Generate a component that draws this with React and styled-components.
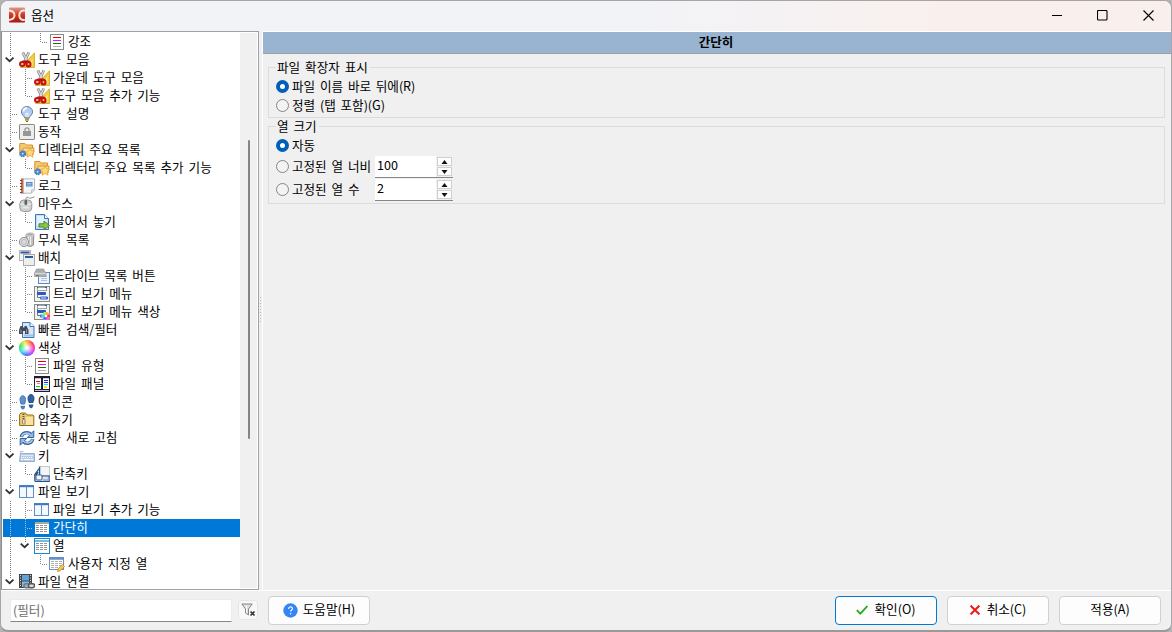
import React, { useState } from 'react'
import styled, { createGlobalStyle, css } from 'styled-components'

const svgProps = { width: 16, height: 16, viewBox: '0 0 16 16', fill: 'none' }

const LinesIcon = () => (
  <svg {...svgProps}>
    <rect x="1.5" y=".5" width="13" height="15" fill="#fff" stroke="#888a85" />
    <path d="M4 3.5h8" stroke="#e00000" />
    <path d="M4 6.5h8" stroke="#ff00ff" />
    <path d="M4 9.5h8" stroke="#008000" />
    <path d="M4 12.5h8" stroke="#b0b0b0" />
  </svg>
)

const ScissorsIcon = () => (
  <svg {...svgProps}>
    <path d="M15.5 .8v14.7H1.500z" fill="#f2cc3e" stroke="#d0a61c" strokeWidth=".8" />
    <path d="M13.500 6.500V13.500H9z" fill="#fbe88c" />
    <path d="M3.800 .5 8 9M9.800 .5 5.800 9" stroke="#858585" strokeWidth="2.800" />
    <path d="M3.800 .8 8 8.500M9.800 .8 5.800 8.500" stroke="#dcdcdc" strokeWidth="1.300" />
    <path d="M3.500 8.500h6.500l1.500 2-4.500 1-4.500-.8z" fill="#b80f0f" />
    <ellipse cx="3.300" cy="12" rx="2.300" ry="2" stroke="#c41212" strokeWidth="2" fill="#e8c9b8" />
    <ellipse cx="9.500" cy="12.200" rx="2" ry="2.200" stroke="#c41212" strokeWidth="2.100" fill="#f0c060" />
  </svg>
)

const BulbIcon = () => (
  <svg {...svgProps}>
    <path d="M8 .6a5.400 5.400 0 0 0-5.600 5.300c0 3 3 4 3.200 6h4.800c.2-2 3.200-3 3.200-6A5.400 5.400 0 0 0 8 .6z" fill="#b4cdef" stroke="#6580ad" />
    <path d="M4.5 5.5A3.5 3.5 0 0 1 8 2.2" stroke="#fff" strokeWidth="1.8" />
    <path d="M7 11V7l1 1 1-1v4" stroke="#f4f8ff" />
    <path d="M6 12.500h4M6 14h4" stroke="#b49b3c" strokeWidth="1.400" />
    <path d="M7 15.500h2" stroke="#666" />
  </svg>
)

const LockIcon = () => (
  <svg {...svgProps}>
    <rect x=".5" y=".5" width="15" height="15" rx=".6" fill="#ededeb" stroke="#888a85" />
    <path d="M6 8V5.800a2 2 0 0 1 4 0V8" stroke="#969696" strokeWidth="1.300" />
    <rect x="4" y="7" width="8" height="5" fill="#969696" />
  </svg>
)

const FolderStarIcon = () => (
  <svg {...svgProps}>
    <path d="M.8 12V1.500h5l1.500 1.500h6.200V6" fill="#f5c873" stroke="#d9902b" />
    <path d="M1.500 13 4.500 6H15l-1 7z" fill="#fbdc98" stroke="#e0942a" />
    <path d="m11 5.800 1.500 3 3.300.5-2.500 2.300.7 3.600-3-1.700-3 1.700.7-3.600-2.500-2.300 3.300-.5z" fill="#ffda7c" stroke="#eba12c" strokeWidth=".8" />
    <circle cx="3.700" cy="11.800" r="2.500" stroke="#3d7cc0" strokeWidth="2" strokeDasharray="1.500 .5" fill="#5c97d6" />
    <circle cx="3.700" cy="11.800" r=".8" fill="#e8f1fb" />
  </svg>
)

const LogIcon = () => (
  <svg {...svgProps}>
    <path d="M3.500.8h12v11l-3 3.400h-9z" fill="#f4f6f9" stroke="#b3bac2" />
    <path d="M12.500 15v-3.200h3" fill="#dcdcdc" stroke="#b3bac2" strokeWidth=".8" />
    <rect x="2" y=".5" width="2.500" height="15" fill="#c46a48" />
    <path d="M1 2.500h2m-2 3h2m-2 3h2m-2 3h2m-2 3h2" stroke="#6f4434" />
    <rect x="7" y="4" width="6.500" height="4.500" fill="#5488ca" />
    <path d="M8 5.500h4.500M8 7h4.500" stroke="#c5d9f0" strokeWidth=".7" />
  </svg>
)

const MouseIcon = () => (
  <svg {...svgProps}>
    <path d="M7 5.500V2.200c0-1 1.500-1.500 2.500-.5s2.500.5 6-.9" stroke="#8a8a8a" />
    <rect x=".8" y="4" width="12" height="11.500" rx="3.800" fill="#cfcfcf" stroke="#9c9c9c" />
    <path d="M1.400 8.200h10.800" stroke="#f6f6f6" />
    <rect x="5.500" y="4" width="2.600" height="5" rx="1" fill="#606060" />
    <path d="M3.500 11.500h6.500" stroke="#e8e8e8" strokeWidth="2.200" />
  </svg>
)

const DragIcon = () => (
  <svg {...svgProps}>
    <path d="M1.500.5h9l4 4v11h-13z" fill="#c3dbf4" stroke="#3a77bd" />
    <path d="M3 2h7v3.500h3V9L3 12z" fill="#e5f1fc" />
    <path d="M10.500.5v4h4" fill="#fff" stroke="#3a77bd" />
    <path d="M5 9.800h5V7l5.500 4.500L10 15.700V13H5z" fill="#8cc84b" stroke="#4c8a20" />
  </svg>
)

const TrashIcon = () => (
  <svg {...svgProps}>
    <path d="M7 2.500 14.800 2l-.4 11c-1.500 1.800-5 1.800-7 0z" fill="#c2c2c2" stroke="#8c8c8c" />
    <path d="M9.500 5v8M11.500 5v8" stroke="#efefef" />
    <ellipse cx="11" cy="2.400" rx="4" ry="1.700" fill="#a8a8a8" stroke="#dcdcdc" />
    <circle cx="5" cy="10" r="4.600" fill="#dedede" stroke="#909090" />
    <circle cx="5" cy="10" r="2.500" stroke="#b4b4b4" />
  </svg>
)

const WindowsIcon = () => (
  <svg {...svgProps}>
    <rect x=".5" y=".5" width="11" height="10" fill="#f3f3f3" stroke="#b5b5b5" />
    <path d="M1.500 2.500h9" stroke="#2c5a9f" strokeWidth="2" />
    <rect x="4.500" y="4.500" width="11" height="11" fill="#eeeeec" stroke="#a9a9a9" />
    <path d="M6 7h8" stroke="#2c5a9f" strokeWidth="2" />
  </svg>
)

const DriveListIcon = () => (
  <svg {...svgProps}>
    <rect x="4.500" y="4.500" width="11" height="11" fill="#eef4fb" stroke="#5d88bf" />
    <path d="M7 8.500h6M7 10.500h6M7 12.500h6" stroke="#aac0dc" />
    <path d="M2.500 1h7l2.500 4.500v3H.5V5z" fill="#adadad" stroke="#9c9c9c" strokeWidth=".8" />
    <path d="M1 5.500h10.500" stroke="#d8d8d8" strokeWidth="1.400" />
    <path d="M2 7.500h3" stroke="#757575" />
  </svg>
)

const TreeMenuIcon = ({ wheel }) => (
  <svg {...svgProps}>
    <rect x=".5" y=".5" width="15" height="15" fill="#f2f2f0" stroke="#888a85" />
    <rect x="3.500" y="1.500" width="9" height="3" fill="#fff" stroke="#9aa4b4" />
    <path d="M3.500 5v6.500H6" stroke="#6f7480" />
    <path d="M3 1.500h1M11 1.500h2" stroke="#2c5a9f" />
    <rect x="3" y="6" width="9" height="3" rx="1" fill="#2d55ca" />
    <rect x="6" y="10.500" width="8" height="3" rx="1" fill="#3c62d0" />
    <path d="M7 12h5" stroke="#cdd7f5" />
    {wheel && (
      <>
        <circle cx="12" cy="12" r="4" fill="#fff" />
        <path d="M12 12V8a4 4 0 0 1 3.500 2z" fill="#ffa62c" />
        <path d="M12 12l3.500-2a4 4 0 0 1 0 4z" fill="#ff3b4e" />
        <path d="M12 12l3.500 2a4 4 0 0 1-3.500 2z" fill="#ff45e0" />
        <path d="M12 12v4a4 4 0 0 1-3.500-2z" fill="#5a62ff" />
        <path d="M12 12l-3.500 2a4 4 0 0 1 0-4z" fill="#2cdfe8" />
        <path d="M12 12l-3.500-2A4 4 0 0 1 12 8z" fill="#9cf03a" />
        <circle cx="12" cy="12" r="1.200" fill="#fff" />
      </>
    )}
  </svg>
)

const SearchIcon = () => (
  <svg {...svgProps}>
    <path d="M3.500.5h7.500l4 4v11H3.500z" fill="#d5e6f8" stroke="#3a77bd" />
    <path d="M11 .5v4h4" fill="#fff" stroke="#3a77bd" />
    <path d="M5 12.500h9v2H5z" fill="#9dc1e8" />
    <path d="M1.500 4h2v1.500h2V4h2L9.500 8v4H6V9H4v3H0V8z" fill="#414a55" />
    <path d="M2 7.500v3.500M7.500 7.500v3.500" stroke="#8d99a6" />
  </svg>
)

const Wheel = styled.span`
  display: block;
  width: 16px;
  height: 16px;
  border-radius: 50%;
  background: radial-gradient(circle, #fff 5%, rgba(255, 255, 255, 0) 70%),
    conic-gradient(#ff9a20, #ff3030 12%, #ff20b0 25%, #b030ff 38%, #3060ff 52%, #20d8e8 66%, #20e050 80%, #d8f020 93%, #ff9a20);
`

const PanelIcon = () => (
  <svg {...svgProps} shapeRendering="crispEdges">
    <rect x=".5" y=".5" width="15" height="15" fill="#fff" stroke="#1c1c38" />
    <path d="M0 1h16M8 2v11M0 13.500h16" stroke="#1c1c38" strokeWidth="1" />
    <path d="M7.500 2v11M8.500 2v11" stroke="#1c1c38" />
    <path d="M1 2.500h6M9 2.500h6" stroke="#c8c8d4" />
    <path d="M1 14.500h14" stroke="#c8c8d4" />
    <path d="M2 5.500h4" stroke="#f00" />
    <path d="M3 7.500h3" stroke="#d88" />
    <path d="M2 10.500h4" stroke="#0d0" />
    <path d="M10 4.500h4M10 6.500h4" stroke="#22f" />
    <path d="M10 8.500h4" stroke="#0ee" />
    <path d="M10 10.500h3" stroke="#ee0" strokeWidth="2" />
  </svg>
)

const FeetIcon = () => (
  <svg {...svgProps}>
    <path d="M1 5.500c0-5 5.500-5 5.500 0 0 2-.6 3-.9 4.500H2C1.800 8.500 1 7.500 1 5.500z" fill="#5f92cb" stroke="#4475b0" />
    <path d="M1.500 11.800h4.500c.3 5-4.500 5-4.500 0z" fill="#4d80bb" />
    <path d="M9 4.500C9-.8 15-.8 15 4.500c0 2-.8 3-1 4h-4C9.800 7.500 9 6.500 9 4.500z" fill="#31609c" stroke="#234f88" />
    <path d="M9.800 10.500h4.500c.2 5-4.700 5-4.500 0z" fill="#2f5e99" />
  </svg>
)

const ZipIcon = () => (
  <svg {...svgProps}>
    <path d="M.6 13.500V2.500L2 1h4.500L8 3h6l.8 1v9.500z" fill="#efcb6f" stroke="#9a6d14" />
    <path d="M7 5h7v8H7z" fill="#f8e3a2" />
    <path d="M4.500 2v7" stroke="#555" strokeWidth="2" strokeDasharray="1 1" />
    <rect x="3.500" y="7.500" width="2.500" height="4.500" rx="1" fill="#e2e2e2" stroke="#777" strokeWidth=".8" />
  </svg>
)

const RefreshIcon = () => (
  <svg {...svgProps}>
    <path d="M2.300 7C3 2.800 8.500 1 12 4.500" stroke="#34639f" strokeWidth="3.400" />
    <path d="M14.800.8v6.700H8.300z" fill="#8fb5e2" stroke="#34639f" />
    <path d="M13.700 9C13 13.200 7.500 15 4 11.500" stroke="#34639f" strokeWidth="3.400" />
    <path d="M1.200 15.200V8.500h6.500z" fill="#8fb5e2" stroke="#34639f" />
    <path d="M2.600 6.700C3.300 3.200 8.500 1.600 12 5M13.400 9.300C12.700 12.800 7.500 14.400 4 11" stroke="#a8c7ea" strokeWidth="1.700" />
  </svg>
)

const KeyboardIcon = () => (
  <svg {...svgProps}>
    <path d="M1.500 5.500V3.500h3" stroke="#a6bfdc" />
    <path d="M1.500 5.500h14v8H.5z" fill="#b9cfe9" stroke="#93afd2" />
    <path d="M2.500 7.500h12M2 9.500h12" stroke="#fff" strokeDasharray="1 1" />
    <path d="M2 11.500h2M5 11.500h6M12 11.500h2" stroke="#fff" />
  </svg>
)

const HotkeyIcon = () => (
  <svg {...svgProps}>
    <path d="M.8 14.500V8.500L5.500 2V1h9.700v14.500H1.500z" fill="#dbe4ef" stroke="#24508c" strokeWidth="1.200" />
    <rect x="6.500" y=".5" width="9" height="9" rx="1" fill="#f3f4f4" stroke="#c5cbd2" />
    <path d="M5.500 2v8H15" stroke="#24508c" />
    <path d="M1.500 9.500 4 6" stroke="#24508c" strokeWidth="1.600" />
    <rect x="2" y="9" width="6" height="5" rx="1" fill="#f6f6f6" stroke="#335c94" />
    <path d="M9 14h5.500v-3" stroke="#8ea9cc" strokeWidth="1.500" />
  </svg>
)

const ColumnsIcon = () => (
  <svg {...svgProps}>
    <rect x=".5" y="1.500" width="14" height="12" fill="#f5f9fe" stroke="#5c8fca" />
    <path d="M0 2.300h15" stroke="#3b78be" strokeWidth="1.800" />
    <path d="M7.500 2v12" stroke="#5c8fca" />
  </svg>
)

const GridIcon = ({ framed }) => (
  <svg {...svgProps} shapeRendering="crispEdges">
    {framed && <rect x=".5" y=".5" width="15" height="15" fill="#fff" stroke="#1787ce" />}
    <rect x="1" y="2" width="14" height="12" fill="#fff" />
    <rect x="1" y="2" width="14" height="2" fill={framed ? '#79b8e2' : '#a9a99f'} />
    <path d="M2 5.500h12M2 7.500h12M2 9.500h12M2 11.500h12" stroke="#929292" strokeDasharray="3 1" />
  </svg>
)

const GridEditIcon = () => (
  <svg {...svgProps}>
    <rect x=".5" y="1.500" width="14" height="12" fill="#fff" stroke="#6d8fbe" />
    <path d="M0 2.500h15" stroke="#668fca" strokeWidth="2.500" />
    <path d="M2 5.500h12M2 7.500h12M2 9.500h12M2 11.500h9" stroke="#b0b0b0" strokeDasharray="3 1" />
    <path d="m8.500 15.500.7-2.700 4.300-4.300 2 2-4.300 4.300z" fill="#f7ca55" stroke="#c68518" strokeWidth=".8" />
  </svg>
)

const FilmIcon = () => (
  <svg {...svgProps}>
    <rect x="0" y="0" width="13" height="14" fill="#454545" />
    <path d="M1.500 1v12M11.500 1v12" stroke="#ddd" strokeDasharray="1 1.500" />
    <rect x="3" y="1" width="7" height="5.500" fill="#5ba4de" />
    <rect x="3" y="7.500" width="7" height="5.500" fill="#82b9e2" />
    <rect x="5" y="9.700" width="6" height="4" rx="2" stroke="#777" strokeWidth="1.500" />
    <rect x="9.500" y="9.700" width="6" height="4" rx="2" stroke="#555" strokeWidth="1.500" fill="#ddd" />
  </svg>
)

const AppLogo = () => (
  <svg {...svgProps}>
    <defs>
      <linearGradient id="logo" x1="0" y1="0" x2="0" y2="1">
        <stop offset="0" stopColor="#e59684" />
        <stop offset=".5" stopColor="#cf3721" />
        <stop offset="1" stopColor="#a8180c" />
      </linearGradient>
    </defs>
    <rect y=".5" width="16" height="15" rx="1" fill="url(#logo)" />
    <path d="M0 3.500c3.500.3 5.500 2 5.500 4.700S3.500 12.500 0 12.900M15.800 3.700C12.500 2.900 10.300 5.100 10.300 8.200s2.200 5.300 5.500 4.600" stroke="#f7e7e4" strokeWidth="2" />
  </svg>
)

const Guide = ({ kind, light }) => {
  const stroke = light ? '#9cc8ee' : '#808080'
  const full = kind === 'line' || kind === 'tee'
  return (
    <svg width="15" height="18" viewBox="0 0 15 18" fill="none">
      {full && <path d="M7.500 0v18" stroke={stroke} strokeDasharray="1 1" />}
      {(kind === 'end' || kind === 'open') && <path d={kind === 'end' ? 'M7.500 0v9' : 'M7.500 0v6'} stroke={stroke} strokeDasharray="1 1" />}
      {(kind === 'tee' || kind === 'end') && <path d="M9 9.500h6" stroke={stroke} strokeDasharray="1 1" />}
      {kind === 'open' && <path d="m2.700 6.700 3.900 3.500 3.900-3.500" stroke="#303030" strokeWidth="1.800" />}
    </svg>
  )
}

// guides: one letter per tree level, l = line, t = tee, e = end, o = open, n = nothing
const KINDS = { l: 'line', t: 'tee', e: 'end', o: 'open', n: 'none' }

const ROWS = [
  ['lne', LinesIcon, '강조'],
  ['o', ScissorsIcon, '도구 모음'],
  ['lt', ScissorsIcon, '가운데 도구 모음'],
  ['le', ScissorsIcon, '도구 모음 추가 기능'],
  ['t', BulbIcon, '도구 설명'],
  ['t', LockIcon, '동작'],
  ['o', FolderStarIcon, '디렉터리 주요 목록'],
  ['le', FolderStarIcon, '디렉터리 주요 목록 추가 기능'],
  ['t', LogIcon, '로그'],
  ['o', MouseIcon, '마우스'],
  ['le', DragIcon, '끌어서 놓기'],
  ['t', TrashIcon, '무시 목록'],
  ['o', WindowsIcon, '배치'],
  ['lt', DriveListIcon, '드라이브 목록 버튼'],
  ['lt', TreeMenuIcon, '트리 보기 메뉴'],
  ['le', TreeMenuIcon, '트리 보기 메뉴 색상', { wheel: true }],
  ['t', SearchIcon, '빠른 검색/필터'],
  ['o', Wheel, '색상'],
  ['lt', LinesIcon, '파일 유형'],
  ['le', PanelIcon, '파일 패널'],
  ['t', FeetIcon, '아이콘'],
  ['t', ZipIcon, '압축기'],
  ['t', RefreshIcon, '자동 새로 고침'],
  ['o', KeyboardIcon, '키'],
  ['le', HotkeyIcon, '단축키'],
  ['o', ColumnsIcon, '파일 보기'],
  ['lt', ColumnsIcon, '파일 보기 추가 기능'],
  ['lt', GridIcon, '간단히'],
  ['lo', GridIcon, '열', { framed: true }],
  ['lne', GridEditIcon, '사용자 지정 열'],
  ['o', FilmIcon, '파일 연결'],
]

function Tree() {
  const [selected, setSelected] = useState('간단히')
  return (
    <TreeBox>
      <TreeList>
        {ROWS.map(([guides, Icon, label, props]) => (
          <TreeRow key={label} $selected={selected === label} onClick={() => setSelected(label)}>
            {guides.split('').map((g, i) => (
              <Guide key={i} kind={KINDS[g]} light={selected === label} />
            ))}
            <IconSlot>
              <Icon {...props} />
            </IconSlot>
            <span>{label}</span>
          </TreeRow>
        ))}
      </TreeList>
      <ScrollTrack>
        <ScrollThumb />
      </ScrollTrack>
    </TreeBox>
  )
}

function Radio({ checked, onClick, children }) {
  return (
    <RadioLabel onClick={onClick}>
      <RadioDot $checked={checked} />
      <RadioText>{children}</RadioText>
    </RadioLabel>
  )
}

function SpinBox({ initial }) {
  const [value, setValue] = useState(initial)
  return (
    <Spin>
      <SpinValue>{value}</SpinValue>
      <SpinButtons>
        <SpinButton onClick={() => setValue(value + 1)}>
          <svg width="7" height="4" viewBox="0 0 7 4"><path d="M3.500 0 6.500 4h-6z" fill="#111" /></svg>
        </SpinButton>
        <SpinButton onClick={() => setValue(value - 1)}>
          <svg width="7" height="4" viewBox="0 0 7 4"><path d="M3.500 4 6.500 0h-6z" fill="#111" /></svg>
        </SpinButton>
      </SpinButtons>
    </Spin>
  )
}

function OptionsPage() {
  const [ext, setExt] = useState('after')
  const [size, setSize] = useState('auto')
  return (
    <Page>
      <PageTitle>간단히</PageTitle>
      <Groups>
        <Group $height={58}>
          <Legend>파일 확장자 표시</Legend>
          <OptionRow>
            <Radio checked={ext === 'after'} onClick={() => setExt('after')}>파일 이름 바로 뒤에(R)</Radio>
          </OptionRow>
          <OptionRow>
            <Radio checked={ext === 'align'} onClick={() => setExt('align')}>정렬 (탭 포함)(G)</Radio>
          </OptionRow>
        </Group>
        <Group $height={85}>
          <Legend>열 크기</Legend>
          <OptionRow>
            <Radio checked={size === 'auto'} onClick={() => setSize('auto')}>자동</Radio>
          </OptionRow>
          <OptionRow $tall>
            <Radio checked={size === 'width'} onClick={() => setSize('width')}>고정된 열 너비</Radio>
            <SpinBox initial={100} />
          </OptionRow>
          <OptionRow $tall>
            <Radio checked={size === 'count'} onClick={() => setSize('count')}>고정된 열 수</Radio>
            <SpinBox initial={2} />
          </OptionRow>
        </Group>
      </Groups>
    </Page>
  )
}

export default function App() {
  return (
    <>
      <GlobalStyle />
      <Window>
        <TitleBar>
          <AppLogo />
          <TitleText>옵션</TitleText>
          <Caption>
            <svg width="10" height="10" viewBox="0 0 10 10"><path d="M0 5.500h10" stroke="#000" /></svg>
            <svg width="11" height="11" viewBox="0 0 11 11"><rect x=".5" y=".5" width="9.500" height="9.500" rx="1" fill="none" stroke="#000" strokeWidth="1.100" /></svg>
            <svg width="11" height="11" viewBox="0 0 11 11"><path d="m.5.5 10 10m0-10-10 10" stroke="#000" strokeWidth="1.100" /></svg>
          </Caption>
        </TitleBar>
        <Body>
          <Tree />
          <Splitter>
            <svg width="3" height="27" viewBox="0 0 3 27"><path d="M1.500 0v27" stroke="#bcbcbc" strokeDasharray="1 2" /></svg>
          </Splitter>
          <OptionsPage />
        </Body>
        <Footer>
          <FilterInput placeholder="(필터)" />
          <ClearButton>
            <svg width="15" height="14" viewBox="0 0 15 14" fill="none">
              <path d="M.8 1h10.400L7.500 6v6l-3-2V6z" fill="#dedede" stroke="#858585" />
              <path d="M5.500 2.500v7" stroke="#fff" />
              <path d="m9.500 8.500 4 4m0-4-4 4" stroke="#333" strokeWidth="1.700" />
            </svg>
          </ClearButton>
          <Button $gap={5}>
            <svg width="15" height="15" viewBox="0 0 15 15">
              <circle cx="7.500" cy="7.500" r="7.200" fill="#3585f6" />
              <path d="M5.600 5.900c0-2.600 3.900-2.500 3.900-.3 0 1.400-1.900 1.400-1.900 3" fill="none" stroke="#fff" strokeWidth="1.200" />
              <circle cx="7.600" cy="10.800" r=".8" fill="#fff" />
            </svg>
            <ButtonText>도움말(H)</ButtonText>
          </Button>
          <Spacer />
          <Button $primary $gap={6}>
            <svg width="12" height="10" viewBox="0 0 12 10"><path d="m.8 5.200 3.500 3.500L11.400 1" fill="none" stroke="#1fae1f" strokeWidth="1.800" /></svg>
            <ButtonText>확인(O)</ButtonText>
          </Button>
          <Button $gap={7}>
            <svg width="10" height="10" viewBox="0 0 10 10"><path d="m.6.600 8.800 8.800m0-8.800L.6 9.400" fill="none" stroke="#f01818" strokeWidth="2" /></svg>
            <ButtonText>취소(C)</ButtonText>
          </Button>
          <Button><ButtonText>적용(A)</ButtonText></Button>
        </Footer>
      </Window>
    </>
  )
}

const GlobalStyle = createGlobalStyle`
  * {
    box-sizing: border-box;
  }
  body {
    margin: 0;
    background: #b4b4b6;
    overflow: hidden;
    color: #000;
    font-family: "Noto Sans CJK KR", sans-serif;
    font-size: 12.6px;
    line-height: 18px;
    word-spacing: 2.1px;
  }
  svg {
    display: block;
    flex: none;
  }
  button, input {
    font: inherit;
    word-spacing: inherit;
    color: inherit;
  }
`

const Window = styled.div`
  width: 1172px;
  height: 632px;
  display: flex;
  flex-direction: column;
  border: 1px solid #a6a6a8;
  border-bottom: 2px solid #9a9a9a;
  border-radius: 8px;
  background: #f0f0f0;
  overflow: hidden;
`

const TitleBar = styled.header`
  height: 30px;
  flex: none;
  display: flex;
  align-items: center;
  padding: 0 17px 2px 8px;
  background: linear-gradient(to right, #f2f3f7 55%, #f9f0ee 80%);
`

const TitleText = styled.span`
  margin-left: 6px;
`

const Caption = styled.div`
  margin-left: auto;
  display: flex;
  align-items: center;
  gap: 35px;
`

const Body = styled.main`
  height: 559px;
  flex: none;
  display: flex;
`

const TreeBox = styled.div`
  width: 258px;
  flex: none;
  display: flex;
  border: 1px solid #a0a0a8;
  border-left-color: #8c8c8c;
  background: #fff;
  overflow: hidden;
`

const TreeList = styled.div`
  width: 238px;
  padding: 1px 0 0 1px;
  overflow: hidden;
`

const TreeRow = styled.div`
  height: 18px;
  display: flex;
  align-items: center;
  white-space: nowrap;
  color: ${({ $selected }) => ($selected ? '#fff' : '#000')};
  background: ${({ $selected }) => ($selected ? '#0078d7' : 'transparent')};
  span:last-child {
    line-height: 16px;
    padding-bottom: 2px;
  }
`

const IconSlot = styled.div`
  width: 16px;
  height: 16px;
  flex: none;
  margin: 0 3px 0 1px;
`

const ScrollTrack = styled.div`
  flex: 1;
  margin: 1px 1px 1px 0;
  padding-top: 107px;
  padding-left: 8px;
  background: #f0f0f0;
`

const ScrollThumb = styled.div`
  width: 2px;
  height: 299px;
  border-radius: 1px;
  background: #858585;
`

const Splitter = styled.div`
  width: 3px;
  display: flex;
  align-items: center;
  overflow: hidden;
`

const Page = styled.section`
  flex: 1;
  border-left: 1px solid #fff;
`

const PageTitle = styled.h1`
  margin: 0;
  height: 23px;
  padding-right: 2px;
  border-top: 1px solid #fff;
  border-bottom: 1px solid #a0a0a0;
  background: #99b4d1;
  text-align: center;
  font-size: 12.5px;
  line-height: 19px;
  font-weight: 700;
`

const Groups = styled.div`
  display: flex;
  flex-direction: column;
  gap: 1px;
  padding: 6px 6px 0 5px;
`

const Group = styled.fieldset`
  height: ${({ $height }) => $height}px;
  margin: 0;
  padding: 3px 7px 0;
  border: 1px solid #dcdcdc;
`

const Legend = styled.legend`
  height: 14px;
  line-height: 14px;
  padding: 0 2px 0 1px;
`

const OptionRow = styled.div`
  display: flex;
  align-items: ${({ $tall }) => ($tall ? 'flex-end' : 'center')};
  height: ${({ $tall }) => ($tall ? 23 : 19)}px;
`

const RadioLabel = styled.label`
  display: flex;
  align-items: center;
  gap: 3px;
  min-width: 99px;
  height: 100%;
  white-space: nowrap;
`

const RadioText = styled.span`
  padding-bottom: 1px;
  letter-spacing: -0.05px;
`

const RadioDot = styled.i`
  width: 13px;
  height: 13px;
  flex: none;
  border-radius: 50%;
  border: 1px solid #858585;
  background: #f3f3f3;
  ${({ $checked }) => $checked && css`
    border: 4px solid #005fb8;
    background: #fff;
  `}
`

const Spin = styled.div`
  width: 78px;
  height: 22px;
  display: flex;
  border-bottom: 1px solid #868686;
  background: #fff;
`

const SpinValue = styled.span`
  flex: 1;
  padding-left: 2px;
  line-height: 18px;
`

const SpinButtons = styled.div`
  width: 17px;
  display: flex;
  flex-direction: column;
  gap: 1px;
  padding: 1px;
  background: #f0f0f0;
`

const SpinButton = styled.button`
  flex: 1;
  display: flex;
  align-items: center;
  justify-content: center;
  padding: 0;
  border: 1px solid #d0d0d0;
  background: #fdfdfd;
`

const Footer = styled.footer`
  flex: 1;
  display: flex;
  align-items: flex-start;
  padding: 5px 10px 0 9px;
  border-top: 1px solid #fff;
`

const FilterInput = styled.input`
  width: 222px;
  height: 23px;
  margin-top: 3px;
  padding: 0 2px 2px;
  border: 1px solid #ececec;
  border-bottom-color: #868686;
  outline: none;
  background: #fff;
  &::placeholder {
    color: #6d6d6d;
    opacity: 1;
  }
`

const ClearButton = styled.button`
  width: 20px;
  height: 20px;
  margin: 4px 10px 0 6px;
  padding: 0;
  display: flex;
  align-items: center;
  justify-content: center;
  border: 1px solid #e6e6e6;
  border-radius: 3px;
  background: #f8f8f8;
`

const Button = styled.button`
  width: 102px;
  height: 29px;
  display: flex;
  align-items: center;
  justify-content: center;
  gap: ${({ $gap }) => $gap || 0}px;
  padding: 0 0 1px;
  border: 1px solid ${({ $primary }) => ($primary ? '#0078d4' : '#d0d0d0')};
  border-radius: 4px;
  background: #fdfdfd;
  & + & {
    margin-left: 10px;
  }
`

const ButtonText = styled.span`
  padding-bottom: 2px;
`

const Spacer = styled.div`
  flex: 1;
`
